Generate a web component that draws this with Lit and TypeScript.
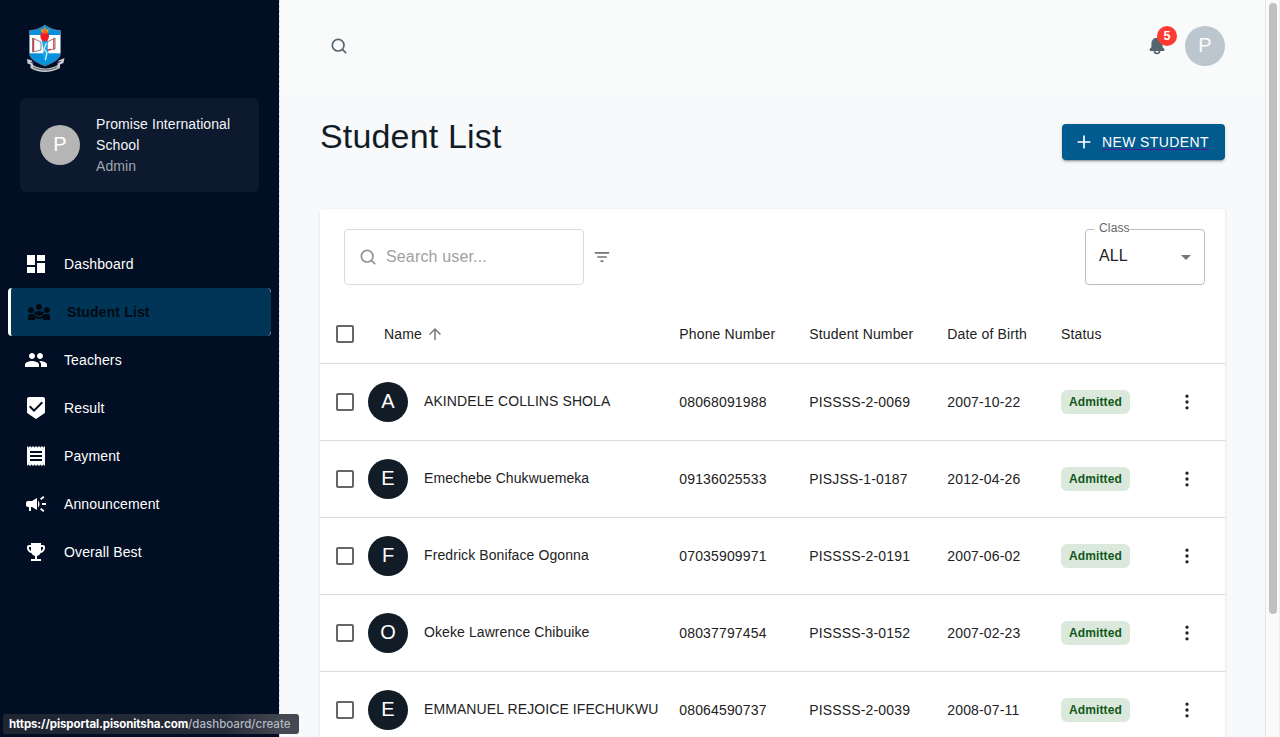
import { LitElement, html, css, svg } from "lit";
import { customElement } from "lit/decorators.js";
import { classMap } from "lit/directives/class-map.js";

const ICONS = {
  dashboard: "M3 13h8V3H3v10zm0 8h8v-6H3v6zm10 0h8V11h-8v10zm0-18v6h8V3h-8z",
  students:
    "M6.32 13.01c.96.02 1.85.5 2.45 1.34C9.5 15.38 10.71 16 12 16c1.29 0 2.5-.62 3.23-1.66.6-.84 1.49-1.32 2.45-1.34-.72-1.22-3.6-2-5.68-2-2.07 0-4.96.78-5.68 2.01zM4 13c1.66 0 3-1.34 3-3S5.66 7 4 7s-3 1.34-3 3 1.34 3 3 3zm16 0c1.66 0 3-1.34 3-3s-1.34-3-3-3-3 1.34-3 3 1.34 3 3 3zm-8-3c1.66 0 3-1.34 3-3s-1.34-3-3-3-3 1.34-3 3 1.34 3 3 3zM21 14h-3.27c-.77 0-1.35.45-1.68.92-.04.06-1.36 2.08-4.05 2.08-1.43 0-3.03-.64-4.05-2.08-.39-.55-1-.92-1.68-.92H3c-1.1 0-2 .9-2 2v4h7v-2.26c1.15.8 2.54 1.26 4 1.26s2.85-.46 4-1.26V20h7v-4c0-1.1-.9-2-2-2z",
  teachers:
    "M16 11c1.66 0 2.99-1.34 2.99-3S17.66 5 16 5c-1.66 0-3 1.34-3 3s1.34 3 3 3zm-8 0c1.66 0 2.99-1.34 2.99-3S9.66 5 8 5C6.34 5 5 6.34 5 8s1.34 3 3 3zm0 2c-2.33 0-7 1.17-7 3.5V19h14v-2.5c0-2.33-4.67-3.5-7-3.5zm8 0c-.29 0-.62.02-.97.05 1.16.84 1.97 1.97 1.97 3.45V19h6v-2.5c0-2.33-4.67-3.5-7-3.5z",
  result:
    "M19 1H5c-1.1 0-1.99.9-1.99 2L3 15.93c0 .69.35 1.3.88 1.66L12 23l8.11-5.41c.53-.36.88-.97.88-1.66L21 3c0-1.1-.9-2-2-2zm-9 15l-5-5 1.41-1.41L10 13.17l7.59-7.59L19 7l-9 9z",
  payment:
    "M18 17H6v-2h12v2zm0-4H6v-2h12v2zm0-4H6V7h12v2zM3 22l1.5-1.5L6 22l1.5-1.5L9 22l1.5-1.5L12 22l1.5-1.5L15 22l1.5-1.5L18 22l1.5-1.5L21 22V2l-1.5 1.5L18 2l-1.5 1.5L15 2l-1.5 1.5L12 2l-1.5 1.5L9 2 7.5 3.5 6 2 4.5 3.5 3 2v20z",
  announcement:
    "M18 11v2h4v-2h-4zm-2 6.61c.96.71 2.21 1.65 3.2 2.39.4-.53.8-1.07 1.2-1.6-.99-.74-2.24-1.68-3.2-2.4-.4.54-.8 1.08-1.2 1.61zM20.4 5.6c-.4-.53-.8-1.07-1.2-1.6-.99.74-2.24 1.68-3.2 2.4.4.53.8 1.07 1.2 1.6.96-.72 2.21-1.65 3.2-2.4zM4 9c-1.1 0-2 .9-2 2v2c0 1.1.9 2 2 2h1v4h2v-4h1l5 3V6L8 9H4zm11.5 3c0-1.33-.58-2.53-1.5-3.35v6.69c.92-.81 1.5-2.01 1.5-3.34z",
  trophy:
    "M19 5h-2V3H7v2H5c-1.1 0-2 .9-2 2v1c0 2.55 1.92 4.63 4.39 4.94.63 1.5 1.98 2.63 3.61 2.96V19H7v2h10v-2h-4v-3.1c1.63-.33 2.98-1.46 3.61-2.96C19.08 12.63 21 10.55 21 8V7c0-1.1-.9-2-2-2zM5 8V7h2v3.82C5.84 10.4 5 9.3 5 8zm14 0c0 1.3-.84 2.4-2 2.82V7h2v1z",
  search:
    "M20.71 19.29l-3.4-3.39A7.92 7.92 0 0 0 19 11a8 8 0 1 0-8 8 7.92 7.92 0 0 0 4.9-1.69l3.39 3.4a1 1 0 0 0 1.42 0 1 1 0 0 0 0-1.42zM5 11a6 6 0 1 1 6 6 6 6 0 0 1-6-6z",
  bell: "M20.52 15.21l-1.8-1.81V8.94a6.86 6.86 0 0 0-5.82-6.88 6.74 6.74 0 0 0-7.62 6.67v4.67l-1.8 1.81A1.64 1.64 0 0 0 4.64 18H8v.34A3.84 3.84 0 0 0 12 22a3.84 3.84 0 0 0 4-3.66V18h3.36a1.64 1.64 0 0 0 1.16-2.79zM14 18.34A1.88 1.88 0 0 1 12 20a1.88 1.88 0 0 1-2-1.66V18h4z",
  plus: "M19 11h-6V5a1 1 0 0 0-2 0v6H5a1 1 0 0 0 0 2h6v6a1 1 0 0 0 2 0v-6h6a1 1 0 0 0 0-2z",
  filter:
    "M11 18h2c.55 0 1-.45 1-1s-.45-1-1-1h-2c-.55 0-1 .45-1 1s.45 1 1 1zM3 7c0 .55.45 1 1 1h16c.55 0 1-.45 1-1s-.45-1-1-1H4c-.55 0-1 .45-1 1zm4 6h10c.55 0 1-.45 1-1s-.45-1-1-1H7c-.55 0-1 .45-1 1s.45 1 1 1z",
  arrowUp: "M4 12l1.41 1.41L11 7.83V20h2V7.83l5.58 5.59L20 12l-8-8-8 8z",
  checkbox:
    "M19 5v14H5V5h14m0-2H5c-1.1 0-2 .9-2 2v14c0 1.1.9 2 2 2h14c1.1 0 2-.9 2-2V5c0-1.1-.9-2-2-2z",
  more: "M12 3a2 2 0 1 0 0 4 2 2 0 0 0 0-4zM12 10a2 2 0 1 0 0 4 2 2 0 0 0 0-4zM12 17a2 2 0 1 0 0 4 2 2 0 0 0 0-4z",
  dropdown: "M7 10l5 5 5-5z",
};

type IconName = keyof typeof ICONS;

const icon = (name: IconName, size = 24) => html`
  <svg class="icon" width=${size} height=${size} viewBox="0 0 24 24" fill="currentColor" aria-hidden="true">
    ${svg`<path d=${ICONS[name]}></path>`}
  </svg>
`;

const NAV: { label: string; icon: IconName; active?: boolean }[] = [
  { label: "Dashboard", icon: "dashboard" },
  { label: "Student List", icon: "students", active: true },
  { label: "Teachers", icon: "teachers" },
  { label: "Result", icon: "result" },
  { label: "Payment", icon: "payment" },
  { label: "Announcement", icon: "announcement" },
  { label: "Overall Best", icon: "trophy" },
];

const STUDENTS = [
  { name: "AKINDELE COLLINS SHOLA", phone: "08068091988", number: "PISSSS-2-0069", dob: "2007-10-22" },
  { name: "Emechebe Chukwuemeka", phone: "09136025533", number: "PISJSS-1-0187", dob: "2012-04-26" },
  { name: "Fredrick Boniface Ogonna", phone: "07035909971", number: "PISSSS-2-0191", dob: "2007-06-02" },
  { name: "Okeke Lawrence Chibuike", phone: "08037797454", number: "PISSSS-3-0152", dob: "2007-02-23" },
  { name: "EMMANUEL REJOICE IFECHUKWU", phone: "08064590737", number: "PISSSS-2-0039", dob: "2008-07-11" },
];

const shared = css`
  * {
    box-sizing: border-box;
  }
  .icon {
    display: block;
    flex: none;
  }
  .avatar {
    display: flex;
    align-items: center;
    justify-content: center;
    flex: none;
    width: 40px;
    height: 40px;
    padding-bottom: 2px;
    border-radius: 50%;
    font-size: 20px;
    line-height: 20px;
    letter-spacing: 0;
    color: #fff;
  }
`;

@customElement("side-nav")
class SideNav extends LitElement {
  static styles = [
    shared,
    css`
      :host {
        display: block;
        flex: none;
        width: 280px;
        height: 100%;
        padding-top: 24px;
        background: #010e23;
        background-clip: padding-box;
        border-right: 1px dashed rgba(145, 158, 171, 0.34);
        box-sizing: border-box;
        color: #fff;
      }
      .logo {
        display: block;
        margin-left: 26px;
      }
      .account {
        display: flex;
        align-items: center;
        gap: 16px;
        height: 94px;
        margin: 25px 20px 48px;
        padding: 0 20px;
        border-radius: 6px;
        background: #0c192e;
      }
      .account .avatar {
        background: #b5b5b5;
      }
      .who {
        line-height: 21px;
        letter-spacing: 0.09px;
        color: #f3f5f7;
      }
      .role {
        color: #a0a5ad;
      }
      .nav {
        padding: 0 8px;
      }
      .item {
        display: flex;
        align-items: center;
        gap: 16px;
        height: 48px;
        padding-left: 16px;
        letter-spacing: 0.12px;
      }
      .item.active {
        position: relative;
        border-left: 3px solid #fff;
        border-radius: 4px;
        background: #003557;
        font-weight: 700;
        letter-spacing: 0.15px;
        color: #020a12;
      }
      .item.active::before,
      .item.active::after {
        content: "";
        position: absolute;
        right: 0;
        width: 4px;
        height: 4px;
        border-right: 1px solid rgba(255, 255, 255, 0.45);
      }
      .item.active::before {
        top: 0;
        border-top-right-radius: 4px;
      }
      .item.active::after {
        bottom: 0;
        border-bottom-right-radius: 4px;
      }
    `,
  ];

  render() {
    return html`
      <svg class="logo" width="40" height="49" viewBox="0 0 40 49" aria-hidden="true">
        <path d="M3.5 6.5C9.5 6.3 14.5 4.5 19 1C23.5 4.5 28.5 6.3 34.5 6.5V29C34.5 35.5 26 39 19 42C12 39 3.5 35.5 3.5 29Z" fill="#0790dc" stroke="#8b9299" stroke-width=".6"></path>
        <path d="M3.8 11H34.2V29.3H3.8Z" fill="#fff"></path>
        <path d="M6.5 14L15 18V26L6.5 28ZM29 14L21 18V26L29 25Z" fill="#fff" stroke="#444b52" stroke-width=".7"></path>
        <path d="M7.6 14.2V27.2M27.8 14.6V25.5M21 26L25 25.5" stroke="#e53a45" stroke-width="1.3" fill="none"></path>
        <path d="M15.8 16H21.8L21.5 24L22.5 29L19.5 39L17 32L17.5 26Z" fill="#19a7e6"></path>
        <path d="M20.5 19L18 25L21 29L19.4 36" stroke="#e9f7ff" stroke-width="1.1" fill="none"></path>
        <path d="M15.500 9L14.800 4.500L17 6L18.500 2.800L20.500 6L22.800 4.500L22 9Z" fill="#f39a1e"></path>
        <ellipse cx="18.7" cy="12.3" rx="4.3" ry="5.3" fill="#ed1c24"></ellipse>
        <path d="M15.6 9.5L18.7 4.5L21.9 9.5Z" fill="#f2661f"></path>
        <path d="M1 35L6 36.5L7 41C14 45.500 25 45.500 31.500 41L32.500 36.500L38.500 34L37.500 39L34 40.500L34 44C25 49 13 49.500 4.500 44L4.500 40.500L1.500 39.500Z" fill="#c8cbd0"></path>
        <path d="M4 38L7.500 37.500L8 40ZM35.500 37L31.500 37.500L31 40Z" fill="#30318f"></path>
        <path d="M7.5 43.1C14 46.9 25 46.9 31.5 42.8" stroke="#5a5e67" stroke-width="1.3" stroke-dasharray="1.6 .4" fill="none"></path>
      </svg>
      <div class="account">
        <div class="avatar">P</div>
        <div class="who">
          <div>Promise International School</div>
          <div class="role">Admin</div>
        </div>
      </div>
      <nav class="nav">
        ${NAV.map(
          (n) => html`<div class=${classMap({ item: true, active: !!n.active })}>${icon(n.icon)}<span>${n.label}</span></div>`
        )}
      </nav>
    `;
  }
}

@customElement("student-table")
class StudentTable extends LitElement {
  static styles = [
    shared,
    css`
      :host {
        display: block;
        border-radius: 4px;
        background: #fff;
        box-shadow: 0 1px 3px rgba(30, 50, 80, 0.14);
        color: #222;
        letter-spacing: 0.15px;
      }
      .toolbar {
        display: flex;
        align-items: center;
        height: 96px;
        padding: 0 20px 0 24px;
      }
      .search {
        display: flex;
        align-items: center;
        gap: 8px;
        width: 240px;
        height: 56px;
        padding: 0 13px;
        border: 1px solid #d9dbdd;
        border-radius: 4px;
        color: #a0a0a0;
        font-size: 16px;
      }
      .search span {
        padding-bottom: 2px;
      }
      .search .icon {
        color: #929292;
      }
      .filter {
        margin-left: 8px;
        color: #757575;
      }
      .select {
        position: relative;
        display: flex;
        align-items: center;
        justify-content: space-between;
        width: 120px;
        height: 56px;
        margin-left: auto;
        padding: 0 6px 0 13px;
        border: 1px solid #bdbdbd;
        border-radius: 4px;
        font-size: 16px;
      }
      .select .icon {
        color: #757575;
      }
      .value {
        padding-bottom: 3px;
      }
      .label {
        position: absolute;
        top: -10px;
        left: 8px;
        padding: 0 0 0 5px;
        background: #fff;
        font-size: 12px;
        line-height: 17px;
        color: #666;
      }
      .row {
        display: grid;
        grid-template-columns: 48px 311.3px 130px 138px 113.7px 1fr 77px;
        align-items: center;
        height: 77px;
        border-bottom: 1px solid #dadada;
      }
      .head {
        height: 59px;
      }
      .check {
        padding-left: 13px;
        color: #666;
      }
      .sort {
        display: flex;
        align-items: center;
        gap: 4px;
        padding-left: 16px;
      }
      .sort .icon {
        color: #777;
      }
      .person {
        display: flex;
        align-items: center;
        gap: 16px;
        white-space: nowrap;
      }
      .person .avatar {
        background: #121c26;
      }
      .name {
        padding-bottom: 1px;
        letter-spacing: 0.09px;
      }
      .chip {
        display: inline-flex;
        align-items: center;
        justify-content: center;
        width: 69px;
        height: 24px;
        border-radius: 6px;
        background: #dbe9dc;
        font-size: 12px;
        font-weight: 700;
        color: #11571a;
      }
      .more {
        padding-left: 29px;
      }
    `,
  ];

  render() {
    return html`
      <div class="toolbar">
        <div class="search">${icon("search", 20)}<span>Search user...</span></div>
        <div class="filter">${icon("filter", 20)}</div>
        <div class="select">
          <span class="label">Class</span>
          <span class="value">ALL</span>
          ${icon("dropdown")}
        </div>
      </div>
      <div class="row head">
        <div class="check">${icon("checkbox")}</div>
        <div class="sort">Name ${icon("arrowUp", 18)}</div>
        <div>Phone Number</div>
        <div>Student Number</div>
        <div>Date of Birth</div>
        <div>Status</div>
      </div>
      ${STUDENTS.map(
        (s) => html`
          <div class="row">
            <div class="check">${icon("checkbox")}</div>
            <div class="person">
              <div class="avatar">${s.name[0].toUpperCase()}</div>
              <span class="name">${s.name}</span>
            </div>
            <div>${s.phone}</div>
            <div>${s.number}</div>
            <div>${s.dob}</div>
            <div><span class="chip">Admitted</span></div>
            <div class="more">${icon("more", 20)}</div>
          </div>
        `
      )}
    `;
  }
}

@customElement("app-root")
class AppRoot extends LitElement {
  static styles = [
    shared,
    css`
      :host {
        position: relative;
        display: flex;
        width: 100%;
        height: 100vh;
        overflow: hidden;
        background: #f8f9fb;
        font: 14px/21px "Liberation Sans", Arial, sans-serif;
      }
      .main {
        flex: 1;
        min-width: 0;
        height: 100%;
        overflow: hidden;
      }
      .topbar {
        display: flex;
        align-items: center;
        height: 92px;
        padding: 0 40px 0 49px;
        background: #f9fbfa;
        color: #54656f;
      }
      .bell {
        position: relative;
        margin-left: auto;
        margin-right: 18px;
      }
      .badge {
        position: absolute;
        top: -10px;
        left: 10px;
        width: 20px;
        height: 20px;
        border-radius: 10px;
        background: #fe3a33;
        color: #fff;
        font-size: 12.5px;
        font-weight: 700;
        line-height: 20px;
        text-align: center;
      }
      .topbar .avatar {
        background: #bcc6cf;
        color: #f9fbfa;
      }
      .content {
        padding: 23px 40px 0;
      }
      .titlebar {
        display: flex;
        justify-content: space-between;
        align-items: flex-start;
        height: 94px;
      }
      .title {
        margin: 0;
        font-size: 34px;
        font-weight: 400;
        line-height: 42px;
        letter-spacing: 0.17px;
        color: #121c26;
      }
      .button {
        display: flex;
        align-items: center;
        gap: 8px;
        height: 36px;
        margin-top: 9px;
        padding: 0 16px 0 12px;
        border-radius: 4px;
        background: #015b8f;
        box-shadow: 0 3px 1px -2px rgba(0, 0, 0, 0.2), 0 2px 2px rgba(0, 0, 0, 0.14), 0 1px 5px rgba(0, 0, 0, 0.12);
        color: #fff;
        letter-spacing: 0.4px;
      }
      .button-text {
        text-decoration: underline #4b1a94 1px;
        text-underline-offset: 2px;
        text-decoration-skip-ink: none;
      }
      .scrollbar {
        flex: none;
        width: 15px;
        height: 100%;
        padding: 3px 2px 0 3px;
        border-left: 1px solid #e4e4e4;
        border-right: 1px solid #eee;
        background: #fafafa;
      }
      .thumb {
        width: 8px;
        height: 611px;
        border-radius: 4px;
        background: #c0c0c0;
      }
      .status {
        position: absolute;
        left: 3px;
        bottom: 3px;
        width: 296px;
        height: 20px;
        padding-left: 6px;
        border-radius: 3px;
        background: linear-gradient(90deg, #1e2531, #262c38 75%, #454852 95%);
        font: 500 11.5px/20px Inter, sans-serif;
        letter-spacing: 0.02px;
        white-space: nowrap;
        color: #b3b9c3;
      }
      .host {
        font-weight: 700;
        letter-spacing: -0.1px;
        color: #fff;
      }
    `,
  ];

  render() {
    return html`
      <side-nav></side-nav>
      <main class="main">
        <header class="topbar">
          ${icon("search", 20)}
          <div class="bell">${icon("bell", 20)}<span class="badge">5</span></div>
          <div class="avatar">P</div>
        </header>
        <section class="content">
          <div class="titlebar">
            <h1 class="title">Student List</h1>
            <div class="button">${icon("plus", 20)}<span class="button-text">NEW STUDENT</span></div>
          </div>
          <student-table></student-table>
        </section>
      </main>
      <div class="scrollbar"><div class="thumb"></div></div>
      <div class="status"><span class="host">https://pisportal.pisonitsha.com</span>/dashboard/create</div>
    `;
  }
}
